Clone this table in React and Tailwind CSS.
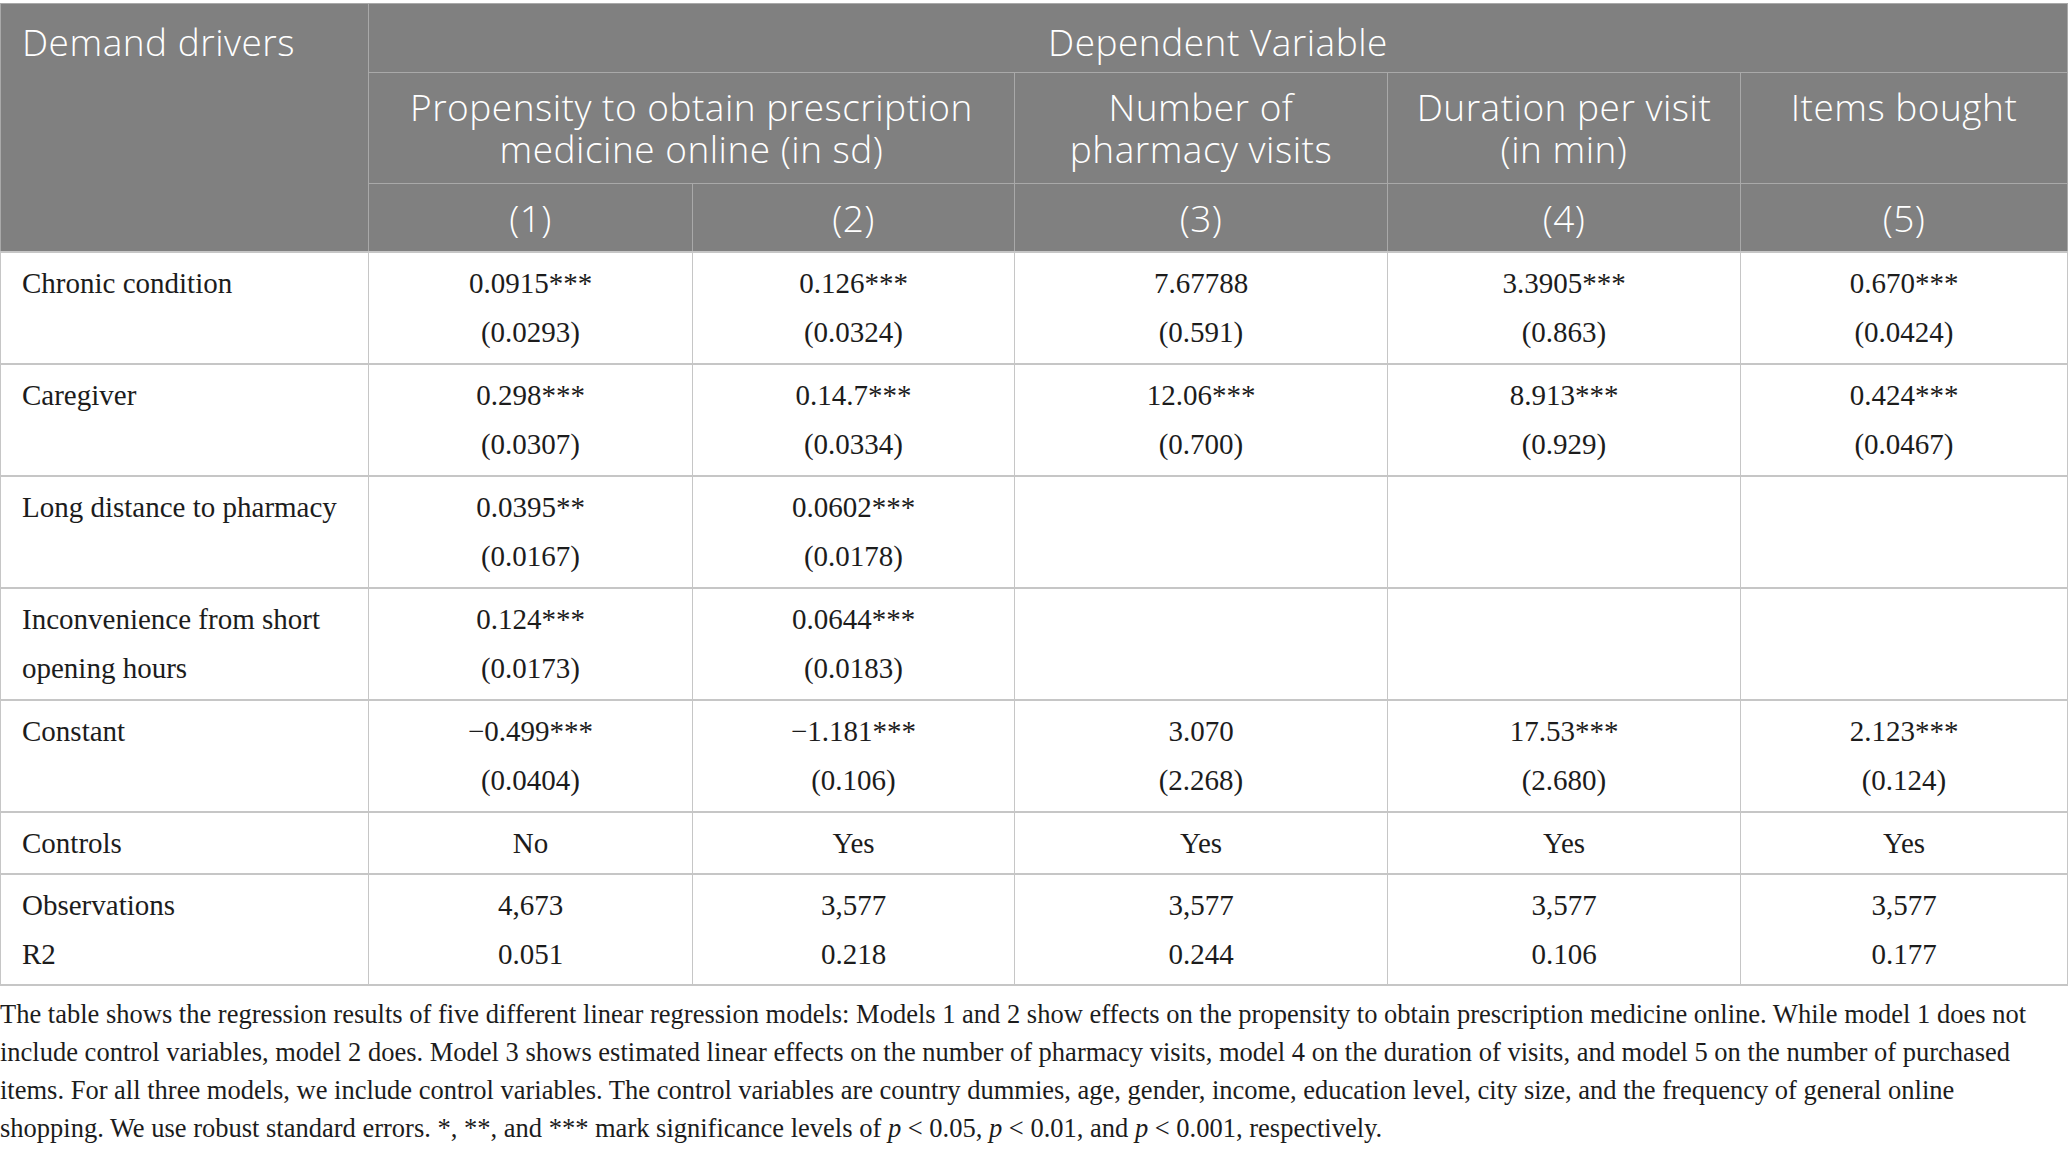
const serif = "font-['Liberation_Serif','Times_New_Roman',serif]"

const rows = [
  {
    label: ['Chronic condition'],
    cells: [
      ['0.0915***', '(0.0293)'],
      ['0.126***', '(0.0324)'],
      ['7.67788', '(0.591)'],
      ['3.3905***', '(0.863)'],
      ['0.670***', '(0.0424)'],
    ],
  },
  {
    label: ['Caregiver'],
    cells: [
      ['0.298***', '(0.0307)'],
      ['0.14.7***', '(0.0334)'],
      ['12.06***', '(0.700)'],
      ['8.913***', '(0.929)'],
      ['0.424***', '(0.0467)'],
    ],
  },
  {
    label: ['Long distance to pharmacy'],
    cells: [['0.0395**', '(0.0167)'], ['0.0602***', '(0.0178)'], [], [], []],
  },
  {
    label: ['Inconvenience from short', 'opening hours'],
    cells: [['0.124***', '(0.0173)'], ['0.0644***', '(0.0183)'], [], [], []],
  },
  {
    label: ['Constant'],
    cells: [
      ['\u22120.499***', '(0.0404)'],
      ['\u22121.181***', '(0.106)'],
      ['3.070', '(2.268)'],
      ['17.53***', '(2.680)'],
      ['2.123***', '(0.124)'],
    ],
  },
  {
    label: ['Controls'],
    tight: true,
    cells: [['No'], ['Yes'], ['Yes'], ['Yes'], ['Yes']],
  },
  {
    label: ['Observations', 'R2'],
    tight: true,
    cells: [
      ['4,673', '0.051'],
      ['3,577', '0.218'],
      ['3,577', '0.244'],
      ['3,577', '0.106'],
      ['3,577', '0.177'],
    ],
  },
]

const Lines = ({ lines }) => (
  <>
    {lines.map((line, i) => (
      <span key={i} className="block whitespace-nowrap">
        {line}
      </span>
    ))}
  </>
)

const P = () => <i>p</i>

export default function App() {
  const th = "font-['Open_Sans',sans-serif] font-light text-[37px] tracking-[0.5px] leading-[42px] text-white border border-[#a9a9a9] align-top"

  return (
    <div className="w-[2068px] bg-white pt-[3px]">
      <table className="w-full table-fixed border-collapse">
        <colgroup>
          <col className="w-[368px]" />
          <col className="w-[324px]" />
          <col className="w-[322px]" />
          <col className="w-[373px]" />
          <col className="w-[353px]" />
          <col />
        </colgroup>
        <thead className="bg-[#808080]">
          <tr>
            <th rowSpan={3} className={`${th} text-left pl-[21px] pt-[17px] pb-[9px]`}>
              Demand drivers
            </th>
            <th colSpan={5} className={`${th} text-center pt-[17px] pb-[9px]`}>
              Dependent Variable
            </th>
          </tr>
          <tr>
            <th colSpan={2} className={`${th} text-center py-[13px]`}>
              <Lines lines={['Propensity to obtain prescription', 'medicine online (in sd)']} />
            </th>
            <th className={`${th} text-center py-[13px]`}>
              <Lines lines={['Number of', 'pharmacy visits']} />
            </th>
            <th className={`${th} text-center py-[13px]`}>
              <Lines lines={['Duration per visit', '(in min)']} />
            </th>
            <th className={`${th} text-center py-[13px]`}>Items bought</th>
          </tr>
          <tr>
            {['(1)', '(2)', '(3)', '(4)', '(5)'].map(n => (
              <th key={n} className={`${th} text-center pt-[13px] pb-[12px]`}>
                {n}
              </th>
            ))}
          </tr>
        </thead>
        <tbody className={`${serif} text-[29px] leading-[49px] text-[#1c1c1c]`}>
          {rows.map(row => (
            <tr key={row.label[0]}>
              <td className={`border-y-2 border-x border-[#c6c6c6] pl-[21px] pt-[6px] align-top ${row.tight ? 'pb-[5px]' : 'pb-[6px]'}`}>
                <Lines lines={row.label} />
              </td>
              {row.cells.map((cell, i) => (
                <td key={i} className={`border-y-2 border-x border-[#c6c6c6] pt-[6px] text-center align-top ${row.tight ? 'pb-[5px]' : 'pb-[6px]'}`}>
                  <Lines lines={cell} />
                </td>
              ))}
            </tr>
          ))}
        </tbody>
      </table>

      <div className={`${serif} text-[26.5px] leading-[38px] text-[#1c1c1c] mt-[9px]`}>
        <p className="whitespace-nowrap">
          The table shows the regression results of five different linear regression models: Models 1 and 2 show effects on the propensity to obtain prescription medicine online. While model 1 does not
        </p>
        <p className="whitespace-nowrap">
          include control variables, model 2 does. Model 3 shows estimated linear effects on the number of pharmacy visits, model 4 on the duration of visits, and model 5 on the number of purchased
        </p>
        <p className="whitespace-nowrap">
          items. For all three models, we include control variables. The control variables are country dummies, age, gender, income, education level, city size, and the frequency of general online
        </p>
        <p className="whitespace-nowrap">
          shopping. We use robust standard errors. *, **, and *** mark significance levels of <P /> &lt; 0.05, <P /> &lt; 0.01, and <P /> &lt; 0.001, respectively.
        </p>
      </div>
    </div>
  )
}
